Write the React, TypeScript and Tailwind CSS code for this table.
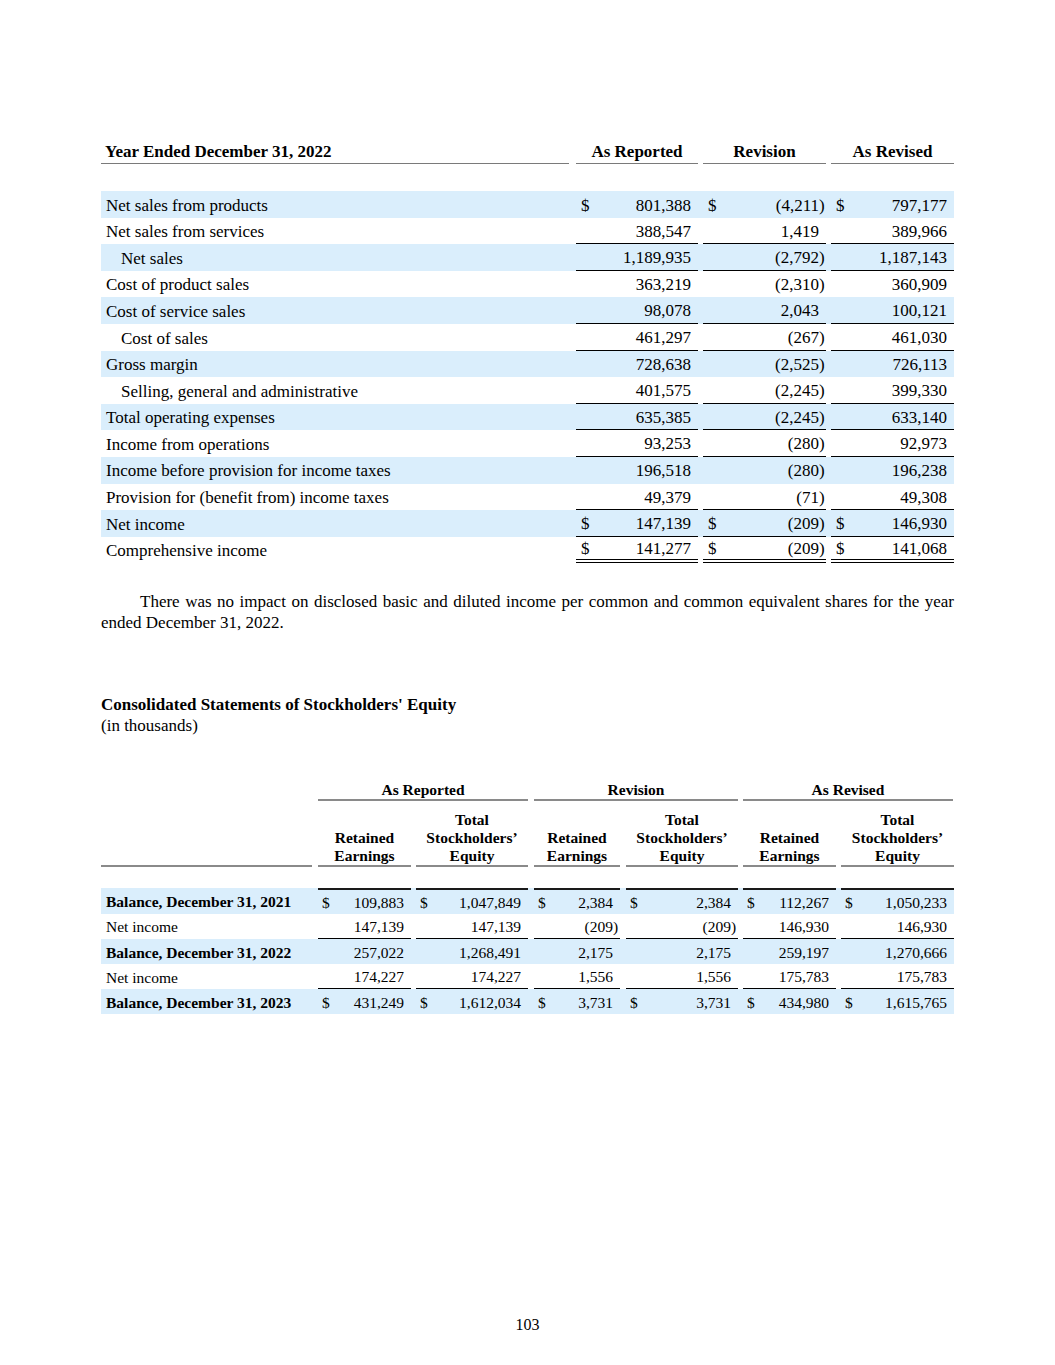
import type { FC } from "react";

type Row1 = {
  label: string;
  vals: [string, string, string];
  indent?: boolean;
  band?: boolean;
  dollar?: boolean;
  line?: "single" | "double";
};

type Row2 = {
  label: string;
  vals: [string, string, string, string, string, string];
  band?: boolean;
  bold?: boolean;
  dollar?: boolean;
  top?: boolean;
  line?: boolean;
};

const rows1: Row1[] = [
  { label: "Net sales from products", vals: ["801,388", "(4,211)", "797,177"], band: true, dollar: true },
  { label: "Net sales from services", vals: ["388,547", "1,419", "389,966"], line: "single" },
  { label: "Net sales", vals: ["1,189,935", "(2,792)", "1,187,143"], band: true, indent: true, line: "single" },
  { label: "Cost of product sales", vals: ["363,219", "(2,310)", "360,909"] },
  { label: "Cost of service sales", vals: ["98,078", "2,043", "100,121"], band: true, line: "single" },
  { label: "Cost of sales", vals: ["461,297", "(267)", "461,030"], indent: true, line: "single" },
  { label: "Gross margin", vals: ["728,638", "(2,525)", "726,113"], band: true },
  { label: "Selling, general and administrative", vals: ["401,575", "(2,245)", "399,330"], indent: true, line: "single" },
  { label: "Total operating expenses", vals: ["635,385", "(2,245)", "633,140"], band: true, line: "single" },
  { label: "Income from operations", vals: ["93,253", "(280)", "92,973"], line: "single" },
  { label: "Income before provision for income taxes", vals: ["196,518", "(280)", "196,238"], band: true },
  { label: "Provision for (benefit from) income taxes", vals: ["49,379", "(71)", "49,308"], line: "single" },
  { label: "Net income", vals: ["147,139", "(209)", "146,930"], band: true, dollar: true, line: "single" },
  { label: "Comprehensive income", vals: ["141,277", "(209)", "141,068"], dollar: true, line: "double" },
];

const rows2: Row2[] = [
  {
    label: "Balance, December 31, 2021",
    vals: ["109,883", "1,047,849", "2,384", "2,384", "112,267", "1,050,233"],
    band: true,
    bold: true,
    dollar: true,
    top: true,
  },
  { label: "Net income", vals: ["147,139", "147,139", "(209)", "(209)", "146,930", "146,930"], line: true },
  {
    label: "Balance, December 31, 2022",
    vals: ["257,022", "1,268,491", "2,175", "2,175", "259,197", "1,270,666"],
    band: true,
    bold: true,
  },
  { label: "Net income", vals: ["174,227", "174,227", "1,556", "1,556", "175,783", "175,783"], line: true },
  {
    label: "Balance, December 31, 2023",
    vals: ["431,249", "1,612,034", "3,731", "3,731", "434,980", "1,615,765"],
    band: true,
    bold: true,
    dollar: true,
  },
];

// column widths / left gaps, in px
const cols1 = ["w-[122px] ml-[7px]", "w-[123px] ml-[5px]", "w-[123px] ml-[5px]"];
const cols2 = [
  "w-[93px] ml-[6px]",
  "w-[112px] ml-[5px]",
  "w-[86px] ml-[6px]",
  "w-[112px] ml-[6px]",
  "w-[93px] ml-[5px]",
  "w-[113px] ml-[5px]",
];

const Amount: FC<{ v: string; dollar?: boolean; pad: string; slot: string }> = ({ v, dollar, pad, slot }) => {
  const neg = v.startsWith("(");
  const body = neg ? v.slice(0, -1) : v;
  return (
    <div className={`flex h-full items-center justify-between pt-[2px] ${pad}`}>
      <span>{dollar ? "$" : ""}</span>
      <span className="flex">
        <span>{body}</span>
        <span className={slot}>{neg ? ")" : ""}</span>
      </span>
    </div>
  );
};

export default function App() {
  return (
    <div className="min-h-[1365px] w-full bg-white font-['Liberation_Serif','Times_New_Roman',serif] text-black">
      <div className="mx-auto w-[853px] pt-[140px]">
        {/* Revision table */}
        <div className="text-[17px]">
          <div className="flex h-[24px] font-bold">
            <div className="flex w-[468px] items-center border-b border-[#7a7a7a] pl-[4px] pt-[1px]">
              Year Ended December 31, 2022
            </div>
            {["As Reported", "Revision", "As Revised"].map((h, i) => (
              <div key={h} className={`flex items-center justify-center border-b border-[#7a7a7a] pt-[1px] ${cols1[i]}`}>
                {h}
              </div>
            ))}
          </div>
          <div className="h-[27px]" />

          {rows1.map((r) => (
            <div key={r.label} className={`flex h-[26.6px] ${r.band ? "bg-[#daeefc]" : ""}`}>
              <div className={`flex w-[468px] items-center pt-[2px] ${r.indent ? "pl-[20px]" : "pl-[5px]"}`}>
                {r.label}
              </div>
              {r.vals.map((v, i) => (
                <div
                  key={i}
                  className={`${cols1[i]} ${
                    r.line === "single"
                      ? "border-b border-black"
                      : r.line === "double"
                        ? "border-b-[4px] border-double border-black"
                        : ""
                  }`}
                >
                  <Amount v={v} dollar={r.dollar} pad="pl-[5px]" slot="w-[7px]" />
                </div>
              ))}
            </div>
          ))}
        </div>

        <p className="mt-[28px] indent-[39px] text-justify text-[17px] leading-[21px]">
          There was no impact on disclosed basic and diluted income per common and common equivalent shares for the year
          ended December 31, 2022.
        </p>

        <div className="mt-[61px] text-[17px] leading-[21px]">
          <div className="font-bold">Consolidated Statements of Stockholders' Equity</div>
          <div>(in thousands)</div>
        </div>

        {/* Equity table */}
        <div className="mt-[43px] text-[15.5px]">
          <div className="flex h-[22px] font-bold">
            <div className="w-[211px]" />
            <div className="ml-[6px] flex w-[210px] items-center justify-center border-b-2 border-[#8a8a8a]">
              As Reported
            </div>
            <div className="ml-[6px] flex w-[204px] items-center justify-center border-b-2 border-[#8a8a8a]">
              Revision
            </div>
            <div className="ml-[5px] flex w-[210px] items-center justify-center border-b-2 border-[#8a8a8a]">
              As Revised
            </div>
          </div>

          <div className="mt-[2px] flex h-[64px] font-bold leading-[18px]">
            <div className="w-[211px] border-b-2 border-[#8a8a8a]" />
            {cols2.map((c, i) => (
              <div key={i} className={`flex items-end justify-center border-b-2 border-[#8a8a8a] text-center ${c}`}>
                {i % 2 === 0 ? (
                  <span>
                    Retained
                    <br />
                    Earnings
                  </span>
                ) : (
                  <span>
                    Total
                    <br />
                    Stockholders’
                    <br />
                    Equity
                  </span>
                )}
              </div>
            ))}
          </div>
          <div className="h-[21px]" />

          {rows2.map((r, ri) => (
            <div key={ri} className={`flex h-[25.2px] ${r.band ? "bg-[#daeefc]" : ""}`}>
              <div className={`flex w-[211px] items-center pl-[5px] pt-[2px] ${r.bold ? "font-bold" : ""}`}>
                {r.label}
              </div>
              {r.vals.map((v, i) => (
                <div
                  key={i}
                  className={`${cols2[i]} ${r.top ? "border-t-2 border-[#1a1a1a]" : ""} ${
                    r.line ? "border-b border-black" : ""
                  }`}
                >
                  <Amount v={v} dollar={r.dollar} pad="pl-[4px]" slot="w-[7px]" />
                </div>
              ))}
            </div>
          ))}
        </div>

        <div className="mt-[300px] text-center text-[16px] leading-[21px]">103</div>
      </div>
    </div>
  );
}
